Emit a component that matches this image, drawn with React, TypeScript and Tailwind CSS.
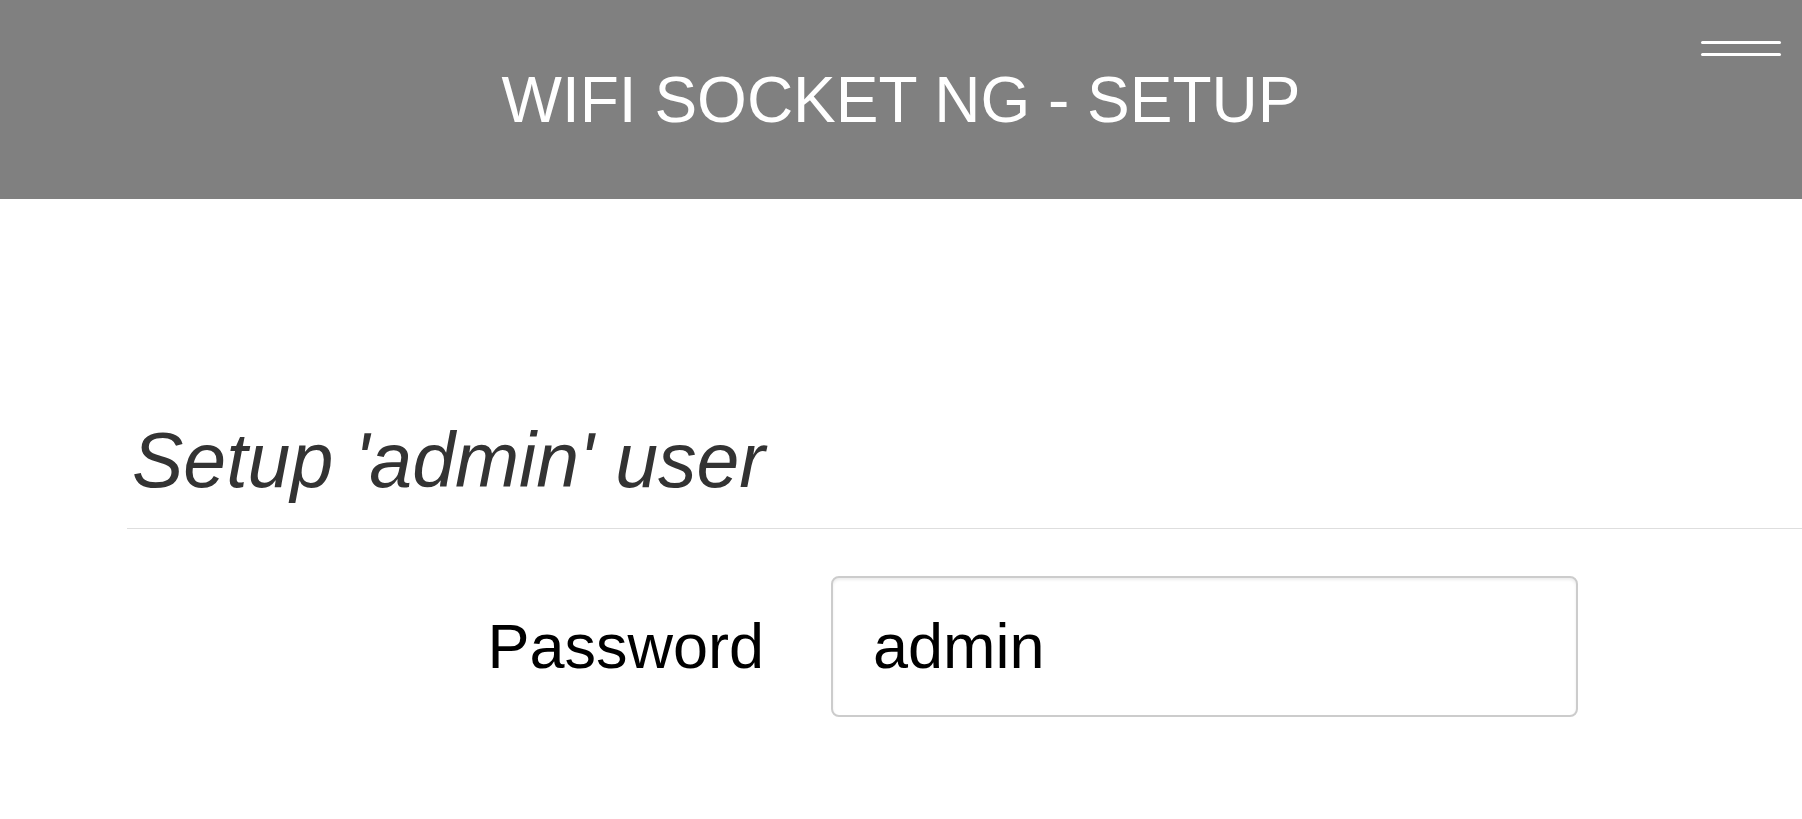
import React from "react";

export default function App() {
  return (
    <div className="w-full min-h-[819px] bg-white font-['Liberation_Sans',Arial,sans-serif]">
      {/* Header */}
      <header className="relative h-[199px] bg-[#808080] flex items-center justify-center">
        <h1 className="text-[64px] leading-none text-white font-normal tracking-normal">
          WIFI SOCKET NG - SETUP
        </h1>
        <button className="absolute top-[41px] right-[21px] w-[80px] flex flex-col gap-[9px]">
          <span className="block h-[3px] w-full rounded-full bg-white" />
          <span className="block h-[3px] w-full rounded-full bg-white" />
        </button>
      </header>

      {/* Content */}
      <main className="pl-[127px]">
        <div className="mt-[223px] border-b border-[#dedede] pb-[29px]">
          <h2 className="pl-[5px] text-[77px] leading-none italic font-normal text-[#333333]">
            Setup 'admin' user
          </h2>
        </div>

        <div className="mt-[47px] flex items-center">
          <label className="w-[637px] text-right text-[63px] leading-none text-black">
            Password
          </label>
          <div className="ml-[67px] w-[747px] h-[141px] flex items-center rounded-[8px] border-2 border-[#cccccc] bg-white px-[40px] shadow-[inset_0_2px_3px_rgba(0,0,0,0.075)]">
            <span className="text-[63px] leading-none text-black">admin</span>
          </div>
        </div>
      </main>
    </div>
  );
}
